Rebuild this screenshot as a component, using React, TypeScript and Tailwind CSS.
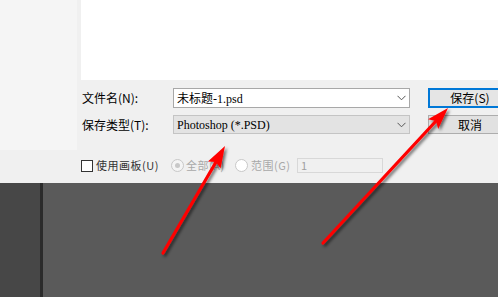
import React from "react";

const cjk = { fontFamily: '"Noto Sans CJK SC", "Liberation Sans", sans-serif' };
const simLike = { fontFamily: '"Liberation Serif", "Noto Sans CJK SC", serif' };

const Chevron = () => (
  <svg width="9" height="6" viewBox="0 0 9 6" className="shrink-0">
    <path d="M0.5 0.8 L4.5 4.8 L8.5 0.8" fill="none" stroke="#555" strokeWidth="1" />
  </svg>
);

const Radio = () => (
  <span className="flex h-[13px] w-[13px] shrink-0 items-center justify-center rounded-full border border-[#c8c8c8] bg-[#f4f4f4]">
    <span className="h-[5px] w-[5px] rounded-full bg-[#c8c8c8]" />
  </span>
);

const EmptyRadio = () => (
  <span className="block h-[13px] w-[13px] shrink-0 rounded-full border border-[#c8c8c8] bg-white" />
);

function Arrows() {
  return (
    <svg className="pointer-events-none absolute inset-0" width="498" height="297" viewBox="0 0 498 297">
      <defs>
        <filter id="sh" x="-20%" y="-20%" width="140%" height="140%">
          <feDropShadow dx="2" dy="2" stdDeviation="1.6" floodColor="#000" floodOpacity="0.55" />
        </filter>
      </defs>
      <g filter="url(#sh)" fill="#ff0000">
        <line x1="163" y1="253" x2="216" y2="162" stroke="#ff0000" strokeWidth="3.2" strokeLinecap="round" />
        <polygon points="225,146 220.5,168.5 216,162 207.9,161.5" />
        <line x1="323" y1="243" x2="436" y2="121" stroke="#ff0000" strokeWidth="3.2" strokeLinecap="round" />
        <polygon points="448,108 438.2,128.9 436,121 428,119.3" />
      </g>
    </svg>
  );
}

export default function App() {
  return (
    <div className="relative h-[297px] w-[498px] overflow-hidden bg-[#f0f0f0]" style={cjk}>
      <div className="flex h-[183px] flex-col bg-[#f0f0f0]">
        <div className="flex h-[150px]">
          <div className="w-[77px] shrink-0 bg-[#f5f5f5]" />
          <div className="flex min-w-0 flex-1 flex-col overflow-hidden pl-[4px]">
            <div className="h-[80px] bg-white" />
            <div className="mt-[8px] flex h-[20px] items-center">
              <span className="w-[92px] shrink-0 pl-[1px] text-[12px] text-black">文件名(N):</span>
              <div className="flex h-[20px] w-[237px] shrink-0 items-center justify-between border border-[#a8a8a8] bg-white pl-[3px] pr-[3px]">
                <span className="text-[12px] text-black" style={simLike}>
                  <span style={cjk}>未标题</span>-1.psd
                </span>
                <Chevron />
              </div>
              <button className="ml-[18px] flex h-[20px] w-[84px] shrink-0 items-center justify-center border-2 border-[#0078d7] bg-[#e5e5e5] text-[12px] text-black">
                保存(S)
              </button>
            </div>
            <div className="mt-[7px] flex h-[19px] items-center">
              <span className="w-[92px] shrink-0 pl-[1px] text-[12px] text-black">保存类型(T):</span>
              <div className="flex h-[19px] w-[237px] shrink-0 items-center justify-between border border-[#c4c4c4] bg-[#e3e3e3] pl-[3px] pr-[3px]">
                <span className="text-[12px] text-black" style={simLike}>Photoshop (*.PSD)</span>
                <Chevron />
              </div>
              <button className="ml-[18px] flex h-[19px] w-[84px] shrink-0 items-center justify-center border border-[#adadad] bg-[#e1e1e1] text-[12px] text-black">
                取消
              </button>
            </div>
          </div>
        </div>
        <div className="flex flex-1 items-center pl-[81px] pb-[2px] text-[11px] tracking-[0.5px] whitespace-nowrap">
          <span className="block h-[12px] w-[12px] shrink-0 border border-[#333] bg-white" />
          <span className="ml-[3px] w-[61px] shrink-0 text-[#333]">使用画板(U)</span>
          <span className="ml-[14px] shrink-0"><Radio /></span>
          <span className="ml-[2px] w-[44px] shrink-0 text-[#a8a8a8]">全部(A)</span>
          <span className="ml-[5px] shrink-0"><EmptyRadio /></span>
          <span className="ml-[3px] w-[38px] shrink-0 text-[#a8a8a8]">范围(G)</span>
          <div className="ml-[8px] flex h-[15px] w-[86px] shrink-0 items-center border border-[#d8d8d8] bg-[#f0f0f0] pl-[3px] text-[11px] text-[#a0a0a0]">
            1
          </div>
        </div>
      </div>
      <div className="flex h-[114px]">
        <div className="w-[40px] shrink-0 bg-[#474747]" />
        <div className="w-[3px] shrink-0 bg-[#2b2b2b]" />
        <div className="flex-1 bg-[#5a5a5a]" />
      </div>
      <Arrows />
    </div>
  );
}
